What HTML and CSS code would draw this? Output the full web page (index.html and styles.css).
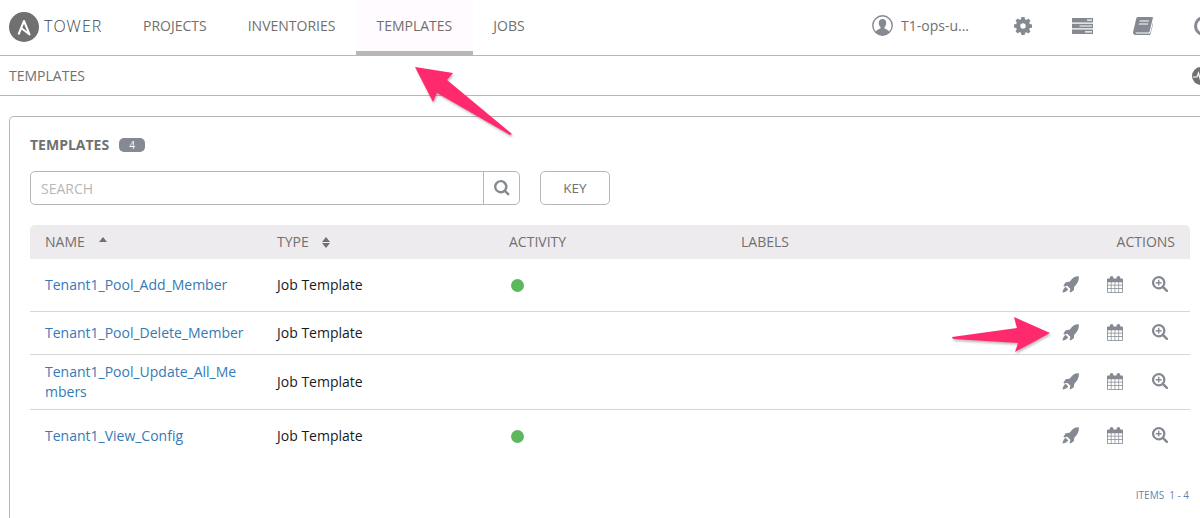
FILE: index.html
```html
<!DOCTYPE html>
<html lang="en">
<head>
<meta charset="utf-8">
<title>Templates</title>
<link rel="stylesheet" href="styles.css">
</head>
<body>
<svg class="defs" width="0" height="0" aria-hidden="true">
  <defs>
    <symbol id="rocket" viewBox="0 0 18 18">
      <path d="M17.800.2c.3 4-1 7.300-3.600 9.900l-1.200 1.200-.5 3.900-3.600 2.400-.8-1 .8-3-3.400-3.400-3 .8-1-.8 2.400-3.600 3.900-.5 1.200-1.200C10.800 2.100 13.800-.1 17.800.2z"/>
      <path d="M3.800 11.400l2.800 2.800c-.9 1.500-3.600 3-6.100 3.300.3-2.500 1.800-5.200 3.300-6.100z"/>
    </symbol>
    <symbol id="calendar" viewBox="0 0 16 17">
      <path fill-rule="evenodd" d="M1 2.500h1.800V1.800a1.800 1.800 0 0 1 3.600 0v.7h3.200v-.7a1.800 1.800 0 0 1 3.600 0v.7H15a1 1 0 0 1 1 1V16a1 1 0 0 1-1 1H1a1 1 0 0 1-1-1V3.500a1 1 0 0 1 1-1zM.8 6.200v2.600h3v-2.600zm3.700 0v2.600h3.100v-2.600zm3.800 0v2.600h3.100v-2.600zm3.800 0v2.600h3.100v-2.600zM.8 9.500v2.600h3V9.500zm3.700 0v2.600h3.100V9.500zm3.800 0v2.600h3.100V9.500zm3.800 0v2.600h3.100V9.500zM.8 12.800v3.400h3v-3.400zm3.700 0v3.400h3.100v-3.400zm3.800 0v3.400h3.100v-3.400zm3.800 0v3.400h3.100v-3.400z"/>
    </symbol>
    <symbol id="zoom" viewBox="0 0 16 16">
      <path fill-rule="evenodd" d="M6.700 0a6.700 6.700 0 0 1 5.500 10.500l3.500 3.500a1.200 1.200 0 0 1-1.700 1.700l-3.500-3.500A6.700 6.700 0 1 1 6.700 0zm0 2.200a4.500 4.500 0 1 0 0 9 4.500 4.500 0 0 0 0-9z"/>
      <path d="M6 3.800h1.400V6h2.200v1.400H7.400v2.200H6V7.400H3.800V6H6z"/>
    </symbol>
  </defs>
</svg>

<header class="nav">
  <a class="brand">
    <svg class="brand-logo" viewBox="0 0 30 30"><circle cx="15" cy="15" r="15"/><path class="brand-a" d="M9.500 22.500L15 9l5.500 13.500-8-6.200"/></svg>
    <span class="brand-name">TOWER</span>
  </a>
  <nav class="nav-links">
    <a class="nav-link">PROJECTS</a>
    <a class="nav-link">INVENTORIES</a>
    <a class="nav-link is-active">TEMPLATES</a>
    <a class="nav-link">JOBS</a>
  </nav>
  <div class="nav-tools">
    <svg class="user-icon" viewBox="0 0 21 21"><circle cx="10.500" cy="10.500" r="9.700" class="ring"/><path d="M3.700 17.400c.4-2.700 3.700-3.100 4.800-4.200v-1.300C7.300 11 6.800 9.500 6.800 7.900c0-2.300 1.500-3.900 3.700-3.900s3.700 1.600 3.700 3.900c0 1.600-.5 3.100-1.700 4v1.300c1.100 1.100 4.400 1.500 4.800 4.200a9.700 9.700 0 0 1-13.600 0z"/></svg>
    <span class="user-name">T1-ops-u...</span>
    <svg class="tool gear" viewBox="0 0 18 18"><path fill-rule="evenodd" d="M7.400 0h3.200l.4 2.300 1.400.6 1.900-1.300 2.200 2.200-1.300 1.900.6 1.400 2.300.4v3.200l-2.300.4-.6 1.400 1.300 1.900-2.200 2.200-1.900-1.300-1.400.6-.4 2.300H7.400L7 15.700l-1.400-.6-1.900 1.300-2.200-2.200 1.300-1.900-.6-1.400L0 10.500V7.400l2.200-.4.600-1.400-1.300-1.900 2.200-2.200 1.900 1.300L7 2.300zM9 6.300a2.700 2.700 0 1 0 0 5.400 2.700 2.700 0 0 0 0-5.400z"/></svg>
    <svg class="tool server" viewBox="0 0 21 16"><path fill-rule="evenodd" d="M0 0h21v4.500H0zm15 1.600v1.200h5V1.600zM0 5.700h21v4.600H0zm7.500 1.700v1.200H20V7.400zM0 11.500h21V16H0zm13 1.700v1.200h7v-1.200z"/></svg>
    <svg class="tool book" viewBox="0 0 20 18"><path fill-rule="evenodd" d="M5 0h14.300c.6 0 .7.400.6.900l-3.300 13.600c-.2.800-.7 1-1.400 1H3.300c-1 0-1.200.8-.2.900h13.200c.6 0 .9-.2 1.100-.8L20 5.500v1.800l-2.400 9.500c-.2.800-.7 1.200-1.500 1.200H2.500C.7 18-.3 16.600.1 14.800L3.300 1.600C3.500.6 4 0 5 0zm1.800 3.400l-.3 1.200h9.300l.3-1.200zm-.8 3l-.3 1.200h9.300l.3-1.200z"/></svg>
    <svg class="tool clipped" viewBox="0 0 20 20"><path fill-rule="evenodd" d="M10 0a10 10 0 1 1 0 20 10 10 0 0 1 0-20zm0 3a7 7 0 1 0 0 14 7 7 0 0 0 0-14z"/></svg>
  </div>
</header>

<div class="crumbs">
  <span class="crumb">TEMPLATES</span>
  <svg class="pulse" viewBox="0 0 18 18"><circle cx="9" cy="9" r="9"/><path d="M1 10h4l1.500-4 2 7 2-5.500 1 2.500H17" fill="none" stroke="#fff" stroke-width="1.200"/></svg>
</div>

<main class="panel">
  <div class="panel-head">
    <h1 class="panel-title">TEMPLATES</h1>
    <span class="badge">4</span>
  </div>
  <div class="toolbar">
    <div class="search">
      <span class="search-input">SEARCH</span>
      <span class="search-btn">
        <svg class="search-icon" viewBox="0 0 15 15"><path fill-rule="evenodd" d="M6.300 0a6.300 6.300 0 0 1 5.200 9.900l3.300 3.300-1.600 1.600-3.300-3.300A6.300 6.300 0 1 1 6.300 0zm0 2.200a4.100 4.100 0 1 0 0 8.200 4.100 4.100 0 0 0 0-8.200z"/></svg>
      </span>
    </div>
    <button class="key-btn">KEY</button>
  </div>

  <table class="list">
    <thead>
      <tr>
        <th>NAME <span class="sort sort-up"></span></th>
        <th>TYPE <span class="sort-both"><span class="sort sort-up"></span><span class="sort sort-down"></span></span></th>
        <th>ACTIVITY</th>
        <th>LABELS</th>
        <th class="right">ACTIONS</th>
      </tr>
    </thead>
    <tbody>
      <tr>
        <td><a class="name">Tenant1_Pool_Add_Member</a></td>
        <td>Job Template</td>
        <td><span class="activity"><span class="dot"></span></span></td>
        <td></td>
        <td class="right"><div class="actions"><svg class="act rocket"><use href="#rocket"/></svg><svg class="act calendar"><use href="#calendar"/></svg><svg class="act zoom"><use href="#zoom"/></svg></div></td>
      </tr>
      <tr>
        <td><a class="name">Tenant1_Pool_Delete_Member</a></td>
        <td>Job Template</td>
        <td></td>
        <td></td>
        <td class="right"><div class="actions"><svg class="act rocket"><use href="#rocket"/></svg><svg class="act calendar"><use href="#calendar"/></svg><svg class="act zoom"><use href="#zoom"/></svg></div></td>
      </tr>
      <tr>
        <td><a class="name">Tenant1_Pool_Update_All_Members</a></td>
        <td>Job Template</td>
        <td></td>
        <td></td>
        <td class="right"><div class="actions"><svg class="act rocket"><use href="#rocket"/></svg><svg class="act calendar"><use href="#calendar"/></svg><svg class="act zoom"><use href="#zoom"/></svg></div></td>
      </tr>
      <tr>
        <td><a class="name">Tenant1_View_Config</a></td>
        <td>Job Template</td>
        <td><span class="activity"><span class="dot"></span></span></td>
        <td></td>
        <td class="right"><div class="actions"><svg class="act rocket"><use href="#rocket"/></svg><svg class="act calendar"><use href="#calendar"/></svg><svg class="act zoom"><use href="#zoom"/></svg></div></td>
      </tr>
    </tbody>
  </table>
  <div class="pager"><span>ITEMS</span><span>1 - 4</span></div>
</main>

<svg class="arrow arrow-top" viewBox="0 0 110 76"><path d="M4 3l38 6-6 7 65 54-2 1-73-42-4 9z"/></svg>
<svg class="arrow arrow-right" viewBox="0 0 110 44"><path d="M100 19L64 3l3 11-65 9 1 2 65 4-3 9z"/></svg>
</body>
</html>
```
FILE: styles.css
```css
* { box-sizing: border-box; }
html, body { height: 518px; overflow: hidden; }
body {
  margin: 0;
  position: relative;
  background: #fff;
  color: #707070;
  font-family: "Open Sans", "Liberation Sans", sans-serif;
  font-size: 14px;
}
.defs { position: absolute; }

.nav {
  display: flex;
  align-items: stretch;
  height: 56px;
  padding-left: 9px;
  border-bottom: 1px solid #b7b7b7;
}
.brand { display: flex; align-items: center; width: 113.5px; height: 52px; }
.brand-logo { width: 30px; height: 30px; margin-top: 1px; fill: #707070; }
.brand-a { fill: none; stroke: #fff; stroke-width: 2; stroke-linejoin: round; }
.brand-name { margin-left: 5px; font-size: 16px; letter-spacing: 1px; font-weight: 300; color: #444; }
.nav-links { display: flex; }
.nav-link {
  display: flex;
  align-items: center;
  padding: 0 20.5px;
  height: 55px;
  border-bottom: 4px solid transparent;
}
.nav-link.is-active { background: #fffbff; border-bottom-color: #b7b7b7; }

.nav-tools {
  display: flex;
  align-items: center;
  margin-left: auto;
  margin-right: -14px;
  height: 51px;
  color: #707070;
}
.user-icon { width: 21px; height: 21px; fill: #848992; }
.user-icon .ring { fill: none; stroke: #848992; stroke-width: 1.400; }
.user-name { margin-left: 8px; width: 68px; white-space: nowrap; }
.tool { fill: #848992; flex: none; }
.gear { width: 18px; height: 18px; margin-left: 45px; }
.server { width: 21px; height: 16px; margin-left: 40px; }
.book { width: 20px; height: 18px; margin-left: 40px; }
.clipped { width: 20px; height: 20px; margin-left: 41px; }

.crumbs {
  display: flex;
  align-items: center;
  justify-content: space-between;
  height: 40px;
  padding-left: 9px;
  margin-right: -10px;
  border-bottom: 1px solid #b7b7b7;
}
.pulse { width: 18px; height: 18px; fill: #707070; }

.panel {
  width: 1201px;
  height: 402px;
  margin: 20px 0 0 9px;
  padding: 20px 20px 0;
  border: 1px solid #b7b7b7;
  border-bottom: 0;
  border-radius: 5px 5px 0 0;
}
.panel-head { display: flex; align-items: center; height: 17px; margin-top: -1px; }
.panel-title { margin: 0; font-size: 14px; font-weight: 700; color: #707070; }
.badge {
  margin-left: 10px;
  width: 26px;
  height: 14px;
  border-radius: 5px;
  background: #848992;
  color: #fff;
  font-size: 10px;
  line-height: 14px;
  text-align: center;
}
.toolbar { display: flex; margin-top: 18px; }
.search {
  display: flex;
  width: 490px;
  height: 34px;
  border: 1px solid #b7b7b7;
  border-radius: 5px;
}
.search-input { flex: 1; padding-left: 10px; line-height: 33px; color: #b7b7b7; }
.search-btn { display: flex; align-items: center; justify-content: center; width: 36px; border-left: 1px solid #b7b7b7; }
.search-icon { width: 16px; height: 16px; fill: #848992; }
.key-btn {
  margin-left: 20px;
  width: 70px;
  height: 34px;
  padding: 0;
  border: 1px solid #b7b7b7;
  border-radius: 5px;
  background: #fff;
  color: #707070;
  font: 13.500px "Open Sans", "Liberation Sans", sans-serif;
}

.list {
  width: 1160px;
  margin-top: 20px;
  border-collapse: collapse;
  table-layout: fixed;
}
.list th:nth-child(-n+4) { width: 232px; }
.list th {
  height: 34px;
  padding: 0 15px 2px;
  background: #eeebee;
  font-size: 14px;
  font-weight: 400;
  text-align: left;
  color: #707070;
}
.list th:first-child { border-radius: 5px 0 0 0; }
.list th:last-child { border-radius: 0 5px 0 0; }
.list th.right, .list td.right { text-align: right; }
.list td {
  padding: 7px 15px;
  border-bottom: 1px solid #d7d7d7;
  line-height: 20px;
  color: #161b1f;
  vertical-align: middle;
}
.list tr:last-child td { border-bottom: 0; }
.name { color: #337ab7; word-break: break-all; display: block; }
.sort {
  display: block;
  width: 0;
  height: 0;
  border-left: 4.500px solid transparent;
  border-right: 4.500px solid transparent;
}
th > .sort-up { display: inline-block; margin-left: 11px; position: relative; top: -5px; }
.sort-up { border-bottom: 5px solid #707070; }
.sort-down { border-top: 5px solid #707070; }
.sort-both { display: inline-flex; flex-direction: column; gap: 1px; margin-left: 10px; vertical-align: middle; }
.activity { display: flex; align-items: center; height: 38px; }
.dot { width: 13px; height: 13px; margin-left: 2px; border-radius: 50%; background: #5cb85c; }
.actions { display: flex; justify-content: flex-end; align-items: center; height: 28px; padding-bottom: 2px; }
.act { flex: none; fill: #848992; }
.rocket { width: 17px; height: 17px; margin-right: 28px; }
.calendar { width: 16px; height: 17px; margin-right: 29px; }
.zoom { width: 16px; height: 16px; margin-right: 7px; }
.pager {
  display: flex;
  justify-content: flex-end;
  gap: 5px;
  margin-top: 26px;
  font-size: 10px;
  color: #5f86b3;
}

.arrow {
  position: absolute;
  fill: #ff2a6d;
  filter: drop-shadow(1px 2px 1px rgba(90, 60, 70, .35));
}
.arrow-top { left: 411px; top: 64px; width: 110px; height: 76px; }
.arrow-right { left: 950px; top: 314px; width: 110px; height: 44px; }
```
